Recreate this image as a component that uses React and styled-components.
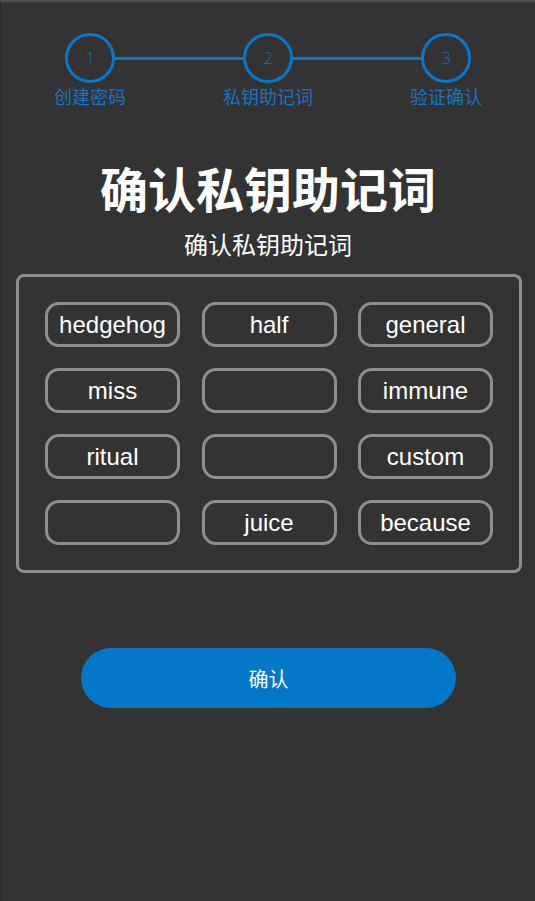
import styled, { createGlobalStyle } from 'styled-components'

const words = [
	'hedgehog', 'half', 'general',
	'miss', '', 'immune',
	'ritual', '', 'custom',
	'', 'juice', 'because'
]

const steps = ['创建密码', '私钥助记词', '验证确认']

const GlobalStyle = createGlobalStyle`
	html, body {
		margin: 0;
		padding: 0;
		background: #333333;
	}
	body {
		font-family: "Liberation Sans", "Noto Sans CJK SC", sans-serif;
	}
`

const Page = styled.div`
	min-height: 901px;
	box-sizing: border-box;
	border-top: 2px solid #4f4f4f;
	border-left: 1px solid #2b2b2b;
	background: #333333;
	padding-top: 31px;
`

const Steps = styled.div`
	display: grid;
	grid-template-columns: repeat(3, 1fr);
`

const Step = styled.div`
	position: relative;
	display: flex;
	flex-direction: column;
	align-items: center;

	&:not(:first-child)::before {
		content: '';
		position: absolute;
		top: 24px;
		left: -50%;
		width: 100%;
		height: 3px;
		background: #0677c9;
	}
`

const Circle = styled.div`
	position: relative;
	z-index: 1;
	box-sizing: border-box;
	width: 50px;
	height: 50px;
	border: 3px solid #0677c9;
	border-radius: 50%;
	background: #333333;
	display: flex;
	align-items: center;
	justify-content: center;
	font-family: "Open Sans", sans-serif;
	font-weight: 300;
	font-size: 16px;
	color: #1f6fb8;
`

const StepLabel = styled.div`
	margin-top: 2px;
	font-family: "Noto Sans CJK SC", sans-serif;
	font-size: 18px;
	line-height: 22px;
	color: #1b72c0;
`

const Title = styled.h1`
	margin: 52px 0 0;
	text-align: center;
	font-family: "Noto Sans CJK SC", sans-serif;
	font-weight: 700;
	font-size: 48px;
	line-height: 56px;
	color: #ffffff;
`

const Subtitle = styled.div`
	margin-top: 14px;
	text-align: center;
	font-family: "Noto Sans CJK SC", sans-serif;
	font-size: 24px;
	line-height: 30px;
	color: #ffffff;
`

const WordBox = styled.div`
	box-sizing: border-box;
	width: 506px;
	margin: 15px 0 0 15px;
	padding: 25px 26px;
	border: 3px solid #8e8e8e;
	border-radius: 8px;
	display: grid;
	grid-template-columns: repeat(3, 135px);
	justify-content: space-between;
	row-gap: 21px;
`

const Word = styled.div`
	box-sizing: border-box;
	height: 45px;
	border: 3px solid #8e8e8e;
	border-radius: 14px;
	display: flex;
	align-items: center;
	justify-content: center;
	font-family: "Liberation Sans", Arial, sans-serif;
	font-size: 24px;
	color: #ffffff;
`

const ConfirmButton = styled.button`
	display: block;
	width: 375px;
	height: 60px;
	margin: 75px 0 0 80px;
	border: none;
	border-radius: 30px;
	background: #0577c9;
	color: #ffffff;
	font-family: "Noto Sans CJK SC", sans-serif;
	font-size: 20px;
	cursor: pointer;
`

const App = () => (
	<Page>
		<GlobalStyle />
		<Steps>
			{steps.map((label, i) => (
				<Step key={label}>
					<Circle>{i + 1}</Circle>
					<StepLabel>{label}</StepLabel>
				</Step>
			))}
		</Steps>
		<Title>确认私钥助记词</Title>
		<Subtitle>确认私钥助记词</Subtitle>
		<WordBox>
			{words.map((w, i) => (
				<Word key={i}>{w}</Word>
			))}
		</WordBox>
		<ConfirmButton>确认</ConfirmButton>
	</Page>
)

export default App
